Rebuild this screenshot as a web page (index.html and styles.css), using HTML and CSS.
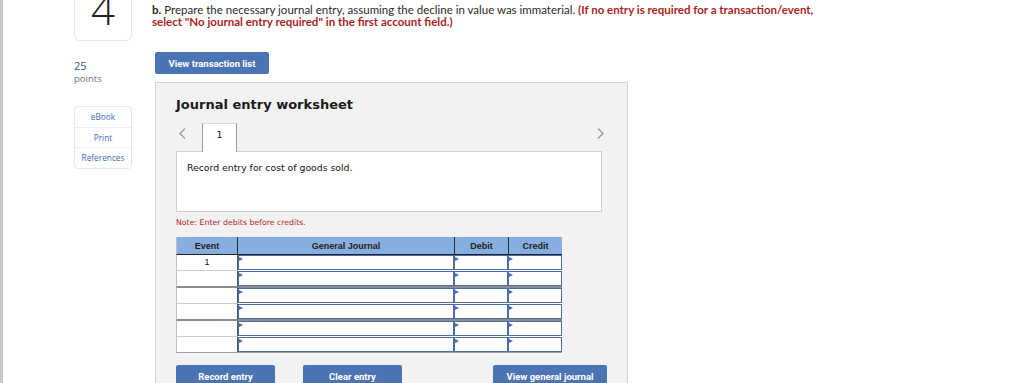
FILE: index.html
```html
<!DOCTYPE html>
<html>
<head>
    <title>Question 4</title>
    <link rel="stylesheet" href="styles.css">
</head>
<body>
    <div class="page">
        <aside class="side">
            <div class="qnum">4</div>
            <div class="score">
                <span class="pts">25</span>
                <span class="pts-label">points</span>
            </div>
            <ul class="tools">
                <li>eBook</li>
                <li>Print</li>
                <li>References</li>
            </ul>
        </aside>
        <main class="main">
            <p class="prompt"><b>b.</b> Prepare the necessary journal entry, assuming the decline in value was immaterial. <strong class="hint">(If no entry is required for a transaction/event,<br>select "No journal entry required" in the first account field.)</strong></p>
            <div class="work">
                <button class="btn btn-list">View transaction list</button>
                <section class="worksheet">
                    <h3>Journal entry worksheet</h3>
                    <div class="tabs">
                        <span class="arrow prev">
                            <svg width="7" height="11" viewBox="0 0 7 11"><polyline points="6,0.5 1,5.5 6,10.5" fill="none" stroke="#9a9a9a" stroke-width="1.3"/></svg>
                        </span>
                        <span class="tab">1</span>
                        <span class="arrow next">
                            <svg width="7" height="11" viewBox="0 0 7 11"><polyline points="1,0.5 6,5.5 1,10.5" fill="none" stroke="#9a9a9a" stroke-width="1.3"/></svg>
                        </span>
                    </div>
                    <div class="entry-desc">Record entry for cost of goods sold.</div>
                    <p class="note">Note: Enter debits before credits.</p>
                    <table class="jtable">
                        <thead>
                            <tr>
                                <th class="c-event">Event</th>
                                <th class="c-gj">General Journal</th>
                                <th class="c-amt">Debit</th>
                                <th class="c-amt">Credit</th>
                            </tr>
                        </thead>
                        <tbody>
                            <tr>
                                <td class="event">1</td>
                                <td class="gj"><div class="field"></div></td>
                                <td><div class="field"></div></td>
                                <td><div class="field"></div></td>
                            </tr>
                            <tr class="split">
                                <td class="event"></td>
                                <td class="gj"><div class="field"></div></td>
                                <td><div class="field"></div></td>
                                <td><div class="field"></div></td>
                            </tr>
                            <tr>
                                <td class="event"></td>
                                <td class="gj"><div class="field"></div></td>
                                <td><div class="field"></div></td>
                                <td><div class="field"></div></td>
                            </tr>
                            <tr class="split">
                                <td class="event"></td>
                                <td class="gj"><div class="field"></div></td>
                                <td><div class="field"></div></td>
                                <td><div class="field"></div></td>
                            </tr>
                            <tr>
                                <td class="event"></td>
                                <td class="gj"><div class="field"></div></td>
                                <td><div class="field"></div></td>
                                <td><div class="field"></div></td>
                            </tr>
                            <tr class="last">
                                <td class="event"></td>
                                <td class="gj"><div class="field"></div></td>
                                <td><div class="field"></div></td>
                                <td><div class="field"></div></td>
                            </tr>
                        </tbody>
                    </table>
                    <div class="actions">
                        <button class="btn btn-sm">Record entry</button>
                        <button class="btn btn-sm">Clear entry</button>
                        <button class="btn btn-wide">View general journal</button>
                    </div>
                </section>
            </div>
        </main>
    </div>
</body>
</html>
```

FILE: styles.css
```css
html, body {
    height: 383px;
    overflow: hidden;
}
body {
    margin: 0;
    font-family: Lato, 'Open Sans', sans-serif;
    background: #fff;
    color: #222;
}
.page {
    display: flex;
    min-height: 100vh;
    border-left: 3px solid #c8c8c8;
    padding-left: 71px;
}

/* left column */
.side {
    width: 58px;
    flex-shrink: 0;
}
.qnum {
    box-sizing: border-box;
    height: 63px;
    margin-top: -22px;
    padding-top: 9px;
    border: 1px solid #e6e6e6;
    border-radius: 5px;
    font-family: 'Open Sans', sans-serif;
    font-weight: 300;
    font-size: 42px;
    line-height: 42px;
    text-align: center;
    color: #222;
}
.score {
    display: flex;
    flex-direction: column;
    margin-top: 18px;
    font-family: 'Open Sans', sans-serif;
}
.pts {
    font-size: 11px;
    line-height: 14px;
    color: #2d5595;
}
.pts-label {
    font-size: 9.5px;
    line-height: 11px;
    color: #707070;
}
.tools {
    list-style: none;
    margin: 22px 0 0;
    padding: 0;
    border: 1px solid #e6e6e6;
    border-radius: 4px;
}
.tools li {
    height: 19.5px;
    line-height: 19.5px;
    text-align: center;
    font-family: 'Open Sans', sans-serif;
    font-size: 8.3px;
    color: #3d6db5;
}
.tools li + li {
    border-top: 1px solid #efefef;
}

/* main column */
.main {
    margin-left: 20px;
    flex: 1;
}
.prompt {
    margin: 0;
    padding-top: 4px;
    font-size: 11.5px;
    line-height: 12px;
    color: #2a2a2a;
}
.prompt b {
    font-weight: 700;
}
.hint {
    color: #ab1f24;
    font-weight: 700;
}
.work {
    padding-left: 3px;
}
.btn {
    display: block;
    height: 22px;
    padding: 0;
    border: none;
    border-radius: 2px;
    background: #4b74b4;
    color: #fff;
    font-family: Roboto, sans-serif;
    font-weight: 700;
    font-size: 9.5px;
    cursor: pointer;
}
.btn-list {
    width: 114px;
    margin-top: 24px;
}
.worksheet {
    box-sizing: border-box;
    width: 473px;
    margin-top: 8px;
    padding: 14px 20px 20px;
    background: #f2f2f2;
    border: 1px solid #d4d4d4;
    min-height: 320px;
}
.worksheet h3 {
    margin: 0;
    font-family: 'DejaVu Sans', Verdana, sans-serif;
    font-weight: 700;
    font-size: 13px;
    line-height: 16px;
    color: #1a1a1a;
}
.tabs {
    display: flex;
    align-items: flex-start;
    height: 28px;
    margin-top: 10px;
}
.arrow {
    display: flex;
    padding-top: 5px;
}
.arrow.prev {
    width: 26px;
    padding-left: 3px;
    box-sizing: border-box;
}
.arrow.next {
    margin-left: auto;
    margin-right: 3px;
}
.tab {
    position: relative;
    box-sizing: border-box;
    width: 35px;
    height: 29px;
    padding-top: 5px;
    background: #fff;
    border: 1px solid #9a9a9a;
    border-top-color: #dcdcdc;
    border-bottom: none;
    text-align: center;
    font-family: 'DejaVu Sans', Verdana, sans-serif;
    font-size: 9.3px;
    line-height: 12px;
    color: #111;
}
.entry-desc {
    box-sizing: border-box;
    width: 426px;
    height: 61px;
    padding: 10px;
    background: #fff;
    border: 1px solid #cfcfcf;
    font-family: 'DejaVu Sans', Verdana, sans-serif;
    font-size: 9.3px;
    line-height: 12px;
    color: #111;
}
.note {
    margin: 6px 0 0;
    font-family: 'DejaVu Sans', Verdana, sans-serif;
    font-size: 7.8px;
    line-height: 10px;
    color: #b3292b;
}

/* journal table */
.jtable {
    margin-top: 9px;
    width: 386px;
    border-collapse: separate;
    border-spacing: 0;
    table-layout: fixed;
    font-family: 'Liberation Sans', Arial, sans-serif;
}
.jtable th {
    height: 17px;
    padding: 0;
    background: #87aee0;
    border-bottom: 1px solid #1f1f1f;
    font-size: 9px;
    font-weight: 700;
    color: #222;
}
.jtable th + th {
    border-left: 1px solid #2a2a2a;
}
.jtable th.c-event {
    width: 60px;
    border-left: 1px solid #c0c0c0;
}
.jtable th.c-gj {
    width: 216px;
}
.jtable td {
    height: 15px;
    padding: 0;
    background: #fff;
    border-bottom: 1px solid #fff;
    vertical-align: top;
}
.jtable td.event {
    border-left: 1px solid #c0c0c0;
    border-bottom-color: #cdcdcd;
    text-align: center;
    font-size: 9px;
    line-height: 14px;
    color: #111;
}
.jtable td.gj {
    border-left: 1px solid #555;
}
.jtable tr.split td {
    border-bottom: 2px solid #8c8c8c;
}
.jtable tr.last td {
    border-bottom-color: #a0a0a0;
}
.field {
    position: relative;
    box-sizing: border-box;
    height: 100%;
    min-height: 15px;
    border: 1px solid #4b6ea8;
}
.field::before {
    content: "";
    position: absolute;
    top: 1px;
    left: 0;
    border-left: 4px solid #3d6fc0;
    border-top: 2px solid transparent;
    border-bottom: 2px solid transparent;
}
.actions {
    display: flex;
    gap: 28px;
    margin-top: 12px;
}
.btn-sm {
    width: 99px;
}
.btn-wide {
    width: 114px;
    margin-left: auto;
}
```
